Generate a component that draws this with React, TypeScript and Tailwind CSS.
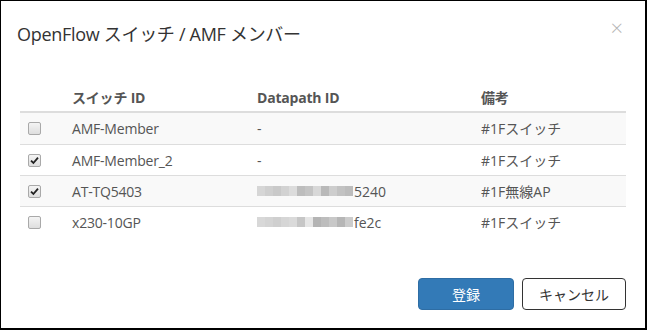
import React from 'react'

const ROWS = [
  { id: 'AMF-Member',   checked: false, dp: null,                    note: '#1Fスイッチ' },
  { id: 'AMF-Member_2', checked: true,  dp: null,                    note: '#1Fスイッチ' },
  { id: 'AT-TQ5403',    checked: true,  dp: { tail: '5240', kind: 'a' }, note: '#1F無線AP' },
  { id: 'x230-10GP',    checked: false, dp: { tail: 'fe2c', kind: 'b' }, note: '#1Fスイッチ' },
]

// pixelated (masked) part of the datapath id
const MOSAIC_A = ['#d6d6d6', '#cfcfcf', '#c9c9c9', '#d2d2d2', '#dcdcdc', '#bdbdbd', '#c4c4c4', '#d8d8d8', '#b9b9b9', '#cdcdcd', '#c2c2c2', '#bcbcbc']
const MOSAIC_B = ['#d8d8d8', '#d4d4d4', '#cfcfcf', '#d6d6d6', '#dadada', '#c6c6c6', '#e6e6e6', '#b4b4b4', '#bdbdbd', '#c8c8c8', '#b6b6b6', '#cccccc']

function Mosaic({ kind }: { kind: string }) {
  const cells = kind === 'a' ? MOSAIC_A : MOSAIC_B
  return (
    <span className="inline-flex h-[10px] mr-px align-[-1px]">
      {cells.map((c, i) => (
        <span key={i} className="w-2 h-full" style={{ background: c }} />
      ))}
    </span>
  )
}

function Check({ on }: { on: boolean }) {
  return (
    <span className="ml-[3px] flex w-[13px] h-[13px] items-center justify-center rounded-[2px] border border-[#a9a9a9] bg-gradient-to-b from-[#f4f4f4] to-[#dedede]">
      {on && (
        <svg width="9" height="9" viewBox="0 0 9 9">
          <path d="M1 4.6 L3.4 7 L8 1.6" fill="none" stroke="#222" strokeWidth="1.8" />
        </svg>
      )}
    </span>
  )
}

export default function App() {
  return (
    <div
      className="w-[647px] h-[330px] bg-white border-t border-l border-r-2 border-b-2 border-black flex flex-col text-[#555] text-[14px]"
      style={{ fontFamily: '"Open Sans", "Noto Sans CJK JP", sans-serif' }}
    >
      {/* header */}
      <div className="flex items-start justify-between pl-4 pr-[22px] pt-[20px] h-[67px]">
        <h4 className="text-[18px] leading-[26px] text-[#333] tracking-[-0.3px]">OpenFlow スイッチ / AMF メンバー</h4>
        <span className="text-[22px] leading-[20px] text-[#b5b5b5] font-light mt-[-4px]">×</span>
      </div>

      {/* table */}
      <div className="mx-[19px] mt-[15px]">
        <div className="grid grid-cols-[47px_185px_224px_1fr] h-[30px] items-center border-b-2 border-[#ddd] font-bold tracking-[-0.2px]">
          <span />
          <span className="pl-[5px]">スイッチ ID</span>
          <span className="pl-[5px]">Datapath ID</span>
          <span className="pl-[5px]">備考</span>
        </div>
        {ROWS.map((r, i) => (
          <div
            key={r.id}
            className={`grid grid-cols-[47px_185px_224px_1fr] h-[31px] items-center ${i > 0 ? 'border-t border-[#ddd]' : ''} ${i % 2 === 0 ? 'bg-[#f9f9f9]' : 'bg-white'}`}
          >
            <span className="pl-[5px]"><Check on={r.checked} /></span>
            <span className="pl-[5px] tracking-[-0.2px]">{r.id}</span>
            <span className="pl-[5px] flex items-center">
              {r.dp ? (<><Mosaic kind={r.dp.kind} />{r.dp.tail}</>) : '-'}
            </span>
            <span className="pl-[5px]">{r.note}</span>
          </div>
        ))}
      </div>

      {/* footer */}
      <div className="mt-auto mb-[18px] mr-[19px] flex justify-end gap-2">
        <button className="w-[96px] h-[32px] rounded-[4px] bg-[#337ab7] border border-[#2e6da4] text-white">登録</button>
        <button className="w-[104px] h-[32px] rounded-[4px] bg-white border border-[#333] text-[#333]">キャンセル</button>
      </div>
    </div>
  )
}
